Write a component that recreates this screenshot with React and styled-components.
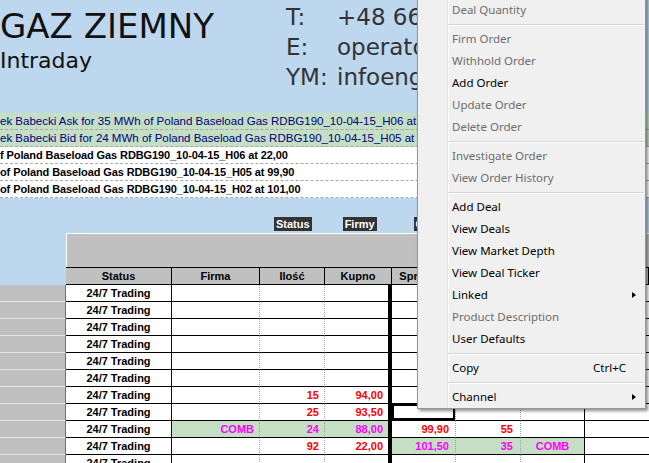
import React from "react";
import styled, { createGlobalStyle } from "styled-components";

const GlobalStyle = createGlobalStyle`
  html, body {
    margin: 0;
    padding: 0;
    background: #bdd7ee;
    overflow: hidden;
  }
  * { box-sizing: border-box; }
`;

const Page = styled.div`
  position: relative;
  width: 649px;
  height: 463px;
  overflow: hidden;
  background: #bdd7ee;
  font-family: "Liberation Sans", Arial, sans-serif;
`;

const Header = styled.header`
  display: flex;
  height: 113px;
`;

const TitleBlock = styled.div`
  width: 286px;
  padding-top: 9px;
  font-family: "DejaVu Sans", Verdana, sans-serif;
  color: #111;
  white-space: nowrap;
`;

const Title = styled.div`
  font-size: 34px;
  line-height: 34px;
`;

const Subtitle = styled.div`
  margin-top: 7px;
  font-size: 22px;
  line-height: 22px;
`;

const Contact = styled.div`
  display: grid;
  grid-template-columns: 51px auto;
  align-content: start;
  padding-top: 2px;
  font-family: "DejaVu Sans", Tahoma, sans-serif;
  font-size: 23px;
  line-height: 30px;
  color: #333;
  white-space: nowrap;
`;

const Ticker = styled.div`
  display: flex;
  flex-direction: column;
`;

const TickerRow = styled.div`
  height: 17px;
  line-height: 16px;
  border-bottom: 1px dashed #a8a8a8;
  background: ${(p) => (p.$own ? "#c4dfc3" : "#ffffff")};
  color: ${(p) => (p.$own ? "#000080" : "#000")};
  font-size: ${(p) => (p.$own ? "11.5px" : "11px")};
  font-weight: ${(p) => (p.$own ? "normal" : "bold")};
  letter-spacing: ${(p) => (p.$own ? "0" : "-0.1px")};
  white-space: nowrap;
  overflow: hidden;
`;

const LabelRow = styled.div`
  display: flex;
  height: 35px;
  padding-top: 19px;
`;

const Chip = styled.span`
  margin-left: ${(p) => p.$gap}px;
  height: 14px;
  padding: 0 2px;
  background: #333;
  color: #fff;
  font-size: 11px;
  font-weight: bold;
  line-height: 14px;
`;

const BandRow = styled.div`
  display: grid;
  grid-template-columns: 66px 1fr;
  height: 34px;
`;

const Band = styled.div`
  grid-column: 2;
  background: #c0c0c0;
  border-top: 1px solid #fff;
  border-left: 1px solid #fff;
`;

const Grid = styled.div`
  display: grid;
  grid-template-columns: 66px 106px 88px 65px 67px 64px 65px 64px 1fr;
  height: ${(p) => (p.$head ? "18px" : "17px")};
`;

const HeadCell = styled.div`
  background: #c0c0c0;
  border-top: 1px solid #000;
  border-bottom: 1px solid #000;
  border-right: 1px solid #000;
  font-size: 11px;
  font-weight: bold;
  line-height: 16px;
  text-align: center;
  white-space: nowrap;
  overflow: hidden;
`;

const RowHead = styled.div`
  background: #c0c0c0;
  border-bottom: 1px solid #e6e6e6;
  border-right: 1px solid #6f6f6f;
`;

const edges = {
  blue: "1px solid #000080",
  dot: "1px dotted #a0a0a0",
  thick: "4px solid #000",
  solid: "1px solid #000",
  none: "0",
};

const Cell = styled.div`
  padding: 0 ${(p) => p.$pad}px;
  background: ${(p) => (p.$green ? "#c4dfc3" : "#fff")};
  color: ${(p) => p.$color || "#000"};
  border-bottom: 1px solid #000;
  border-right: ${(p) => edges[p.$edge]};
  font-size: 11px;
  font-weight: bold;
  line-height: 16px;
  text-align: ${(p) => p.$align};
  white-space: nowrap;
  overflow: hidden;
  box-shadow: ${(p) => (p.$selected ? "inset 0 0 0 2px #000" : "none")};
`;

const Menu = styled.div`
  position: absolute;
  left: 417px;
  top: -4px;
  width: 229px;
  padding: 2px 0 0;
  background: linear-gradient(
      to right,
      transparent 29px,
      #e2e3e3 29px,
      #e2e3e3 30px,
      #ffffff 30px,
      #ffffff 31px,
      transparent 31px
    ),
    #f0f0f0;
  border: 1px solid #979797;
  box-shadow: 2px 2px 3px rgba(0, 0, 0, 0.45);
  font-family: "Noto Sans", "Open Sans", sans-serif;
  font-size: 11.5px;
`;

const Item = styled.div`
  display: flex;
  align-items: center;
  height: 22px;
  padding-left: 34px;
  line-height: 22px;
  color: ${(p) => (p.$off ? "#6d6d6d" : "#000")};
  white-space: nowrap;
`;

const ItemLabel = styled.span`
  flex: 1;
`;

const Shortcut = styled.span`
  margin-right: 19px;
`;

const Arrow = styled.span`
  width: 0;
  height: 0;
  margin-right: 9px;
  border-left: 4px solid #000;
  border-top: 3.5px solid transparent;
  border-bottom: 3.5px solid transparent;
`;

const Separator = styled.div`
  height: 7px;
  margin-left: 30px;
  margin-right: 1px;
  padding-top: 3px;
  &::after {
    content: "";
    display: block;
    border-top: 1px solid #d7d7d7;
    border-bottom: 1px solid #fff;
  }
`;

const tickers = [
  { own: true, text: "ek Babecki Ask for 35 MWh of Poland Baseload Gas RDBG190_10-04-15_H06 at 94,00" },
  { own: true, text: "ek Babecki Bid for 24 MWh of Poland Baseload Gas RDBG190_10-04-15_H05 at 88,00" },
  { text: "f Poland Baseload Gas RDBG190_10-04-15_H06 at 22,00" },
  { text: "of Poland Baseload Gas RDBG190_10-04-15_H05 at 99,90" },
  { text: "of Poland Baseload Gas RDBG190_10-04-15_H02 at 101,00" },
];

const columns = [
  { key: "status", align: "center", edge: "blue", pad: 2 },
  { key: "firm", align: "right", edge: "dot", pad: 5 },
  { key: "qty", align: "right", edge: "dot", pad: 5 },
  { key: "bid", align: "right", edge: "thick", pad: 5 },
  { key: "ask", align: "right", edge: "dot", pad: 6 },
  { key: "askQty", align: "right", edge: "dot", pad: 7 },
  { key: "askFirm", align: "center", edge: "solid", pad: 2 },
  { key: "askStatus", align: "center", edge: "none", pad: 2 },
];

const headings = ["Status", "Firma", "Ilość", "Kupno", "Sprzedaż", "Ilość", "Firma", "Status"];

const RED = "#ff0000";
const PINK = "#ff00ff";
const empty = {};

const orders = [
  empty, empty, empty, empty, empty, empty,
  { qty: "15", bid: "94,00", left: RED },
  { qty: "25", bid: "93,50", left: RED, selected: "ask" },
  { firm: "COMB", qty: "24", bid: "88,00", left: PINK, greenLeft: true, ask: "99,90", askQty: "55", right: RED },
  { qty: "92", bid: "22,00", left: RED, ask: "101,50", askQty: "35", askFirm: "COMB", right: PINK, greenRight: true },
  empty,
];

const leftKeys = ["firm", "qty", "bid"];
const rightKeys = ["ask", "askQty", "askFirm"];

const menu = [
  { label: "Deal Quantity", off: true },
  "sep",
  { label: "Firm Order", off: true },
  { label: "Withhold Order", off: true },
  { label: "Add Order" },
  { label: "Update Order", off: true },
  { label: "Delete Order", off: true },
  "sep",
  { label: "Investigate Order", off: true },
  { label: "View Order History", off: true },
  "sep",
  { label: "Add Deal" },
  { label: "View Deals" },
  { label: "View Market Depth" },
  { label: "View Deal Ticker" },
  { label: "Linked", sub: true },
  { label: "Product Description", off: true },
  { label: "User Defaults" },
  "sep",
  { label: "Copy", shortcut: "Ctrl+C" },
  "sep",
  { label: "Channel", sub: true },
];

function OrderRow({ row }) {
  return (
    <Grid>
      <RowHead />
      {columns.map((c) => {
        const isLeft = leftKeys.includes(c.key);
        const isRight = rightKeys.includes(c.key);
        const value = c.key === "status" ? "24/7 Trading" : row[c.key];
        return (
          <Cell
            key={c.key}
            $align={c.align}
            $edge={c.edge}
            $pad={c.pad}
            $green={(isLeft && row.greenLeft) || (isRight && row.greenRight)}
            $color={isLeft ? row.left : isRight ? row.right : undefined}
            $selected={row.selected === c.key}
          >
            {value}
          </Cell>
        );
      })}
    </Grid>
  );
}

export default function App() {
  return (
    <Page>
      <GlobalStyle />
      <Header>
        <TitleBlock>
          <Title>GAZ ZIEMNY</Title>
          <Subtitle>Intraday</Subtitle>
        </TitleBlock>
        <Contact>
          <span>T:</span>
          <span>+48 665 000 000</span>
          <span>E:</span>
          <span>operator@gaz.pl</span>
          <span>YM:</span>
          <span>infoengine</span>
        </Contact>
      </Header>

      <Ticker>
        {tickers.map((t, i) => (
          <TickerRow key={i} $own={t.own}>
            {t.text}
          </TickerRow>
        ))}
      </Ticker>

      <LabelRow>
        <Chip $gap={274}>Status</Chip>
        <Chip $gap={31}>Firmy</Chip>
        <Chip $gap={37}>Ceny</Chip>
      </LabelRow>

      <BandRow>
        <Band />
      </BandRow>

      <Grid $head>
        <div />
        {headings.map((h, i) => (
          <HeadCell key={i}>{h}</HeadCell>
        ))}
      </Grid>

      {orders.map((row, i) => (
        <OrderRow key={i} row={row} />
      ))}

      <Menu>
        {menu.map((m, i) =>
          m === "sep" ? (
            <Separator key={i} />
          ) : (
            <Item key={i} $off={m.off}>
              <ItemLabel>{m.label}</ItemLabel>
              {m.shortcut && <Shortcut>{m.shortcut}</Shortcut>}
              {m.sub && <Arrow />}
            </Item>
          )
        )}
      </Menu>
    </Page>
  );
}
